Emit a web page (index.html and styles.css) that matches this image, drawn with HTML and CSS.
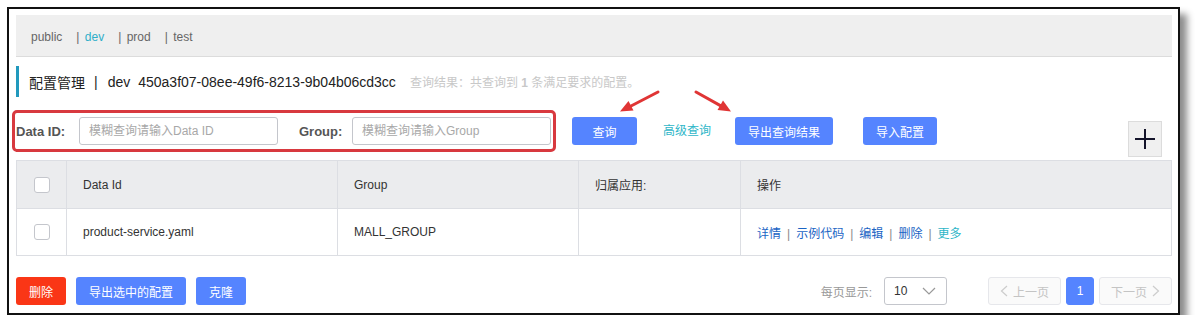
FILE: index.html
```html
<!DOCTYPE html>
<html lang="zh-CN">
<head>
    <meta charset="UTF-8">
    <title>配置管理</title>
    <link rel="stylesheet" href="styles.css">
</head>
<body>
<div class="frame">
    <div class="ns-bar">
        <span class="ns">public</span>
        <span class="ns"><i>|</i> <em>dev</em></span>
        <span class="ns"><i>|</i> prod</span>
        <span class="ns"><i>|</i> test</span>
    </div>

    <div class="title-row">
        <span class="title-cn">配置管理</span>
        <span class="title-sep">|</span>
        <span class="title-ns">dev</span>
        <span class="title-id">450a3f07-08ee-49f6-8213-9b04b06cd3cc</span>
        <span class="title-result">查询结果：共查询到 <b>1</b> 条满足要求的配置。</span>
    </div>

    <div class="search-row">
        <div class="search-box">
            <label class="lbl lbl-id">Data ID:</label>
            <input class="inp" type="text" placeholder="模糊查询请输入Data ID">
            <label class="lbl lbl-group">Group:</label>
            <input class="inp" type="text" placeholder="模糊查询请输入Group">
        </div>
        <button class="btn btn-query">查询</button>
        <a class="adv-link">高级查询</a>
        <button class="btn btn-export">导出查询结果</button>
        <button class="btn btn-import">导入配置</button>
        <button class="btn-add" aria-label="add">
            <svg width="22" height="22" viewBox="0 0 22 22"><path d="M1 11H21M11 1V21" stroke="#14142a" stroke-width="2"/></svg>
        </button>
    </div>

    <table class="cfg-table">
        <thead>
            <tr>
                <th class="col-check"><span class="chk"></span></th>
                <th class="col-id">Data Id</th>
                <th class="col-group">Group</th>
                <th class="col-app">归属应用:</th>
                <th>操作</th>
            </tr>
        </thead>
        <tbody>
            <tr>
                <td class="col-check"><span class="chk"></span></td>
                <td>product-service.yaml</td>
                <td>MALL_GROUP</td>
                <td></td>
                <td class="ops">
                    <a>详情</a><span class="bar">|</span><a>示例代码</a><span class="bar">|</span><a>编辑</a><span class="bar">|</span><a>删除</a><span class="bar">|</span><a class="more">更多</a>
                </td>
            </tr>
        </tbody>
    </table>

    <div class="foot-row">
        <button class="btn btn-del">删除</button>
        <button class="btn btn-sel">导出选中的配置</button>
        <button class="btn btn-clone">克隆</button>

        <div class="pager">
            <span class="per-page">每页显示:</span>
            <div class="page-size">
                <span>10</span>
                <svg width="14" height="8" viewBox="0 0 14 8"><path d="M1 1L7 7L13 1" fill="none" stroke="#999" stroke-width="1.2"/></svg>
            </div>
            <button class="pg pg-prev">
                <svg width="8" height="12" viewBox="0 0 8 12"><path d="M7 1L1.5 6L7 11" fill="none" stroke="#ccc" stroke-width="1.2"/></svg>
                上一页
            </button>
            <button class="pg pg-cur">1</button>
            <button class="pg pg-next">
                下一页
                <svg width="8" height="12" viewBox="0 0 8 12"><path d="M1 1L6.5 6L1 11" fill="none" stroke="#ccc" stroke-width="1.2"/></svg>
            </button>
        </div>
    </div>

    <!-- annotation arrows drawn over the screenshot -->
    <svg class="marks" width="1196" height="330" viewBox="0 0 1196 330">
        <path d="M658 92L631 106" stroke="#e03535" stroke-width="3" stroke-linecap="round"/>
        <polygon points="620,111.5 633.5,110.5 628.5,101" fill="#e03535"/>
        <path d="M696 92L720.4 105.6" stroke="#e03535" stroke-width="3" stroke-linecap="round"/>
        <polygon points="731,111.5 717.5,110 723,100.5" fill="#e03535"/>
    </svg>
</div>
</body>
</html>
```

FILE: styles.css
```css
body {
    margin: 0;
    background: #fff;
    font-family: "Liberation Sans", "Noto Sans CJK SC", sans-serif;
    font-size: 12px;
    color: #333;
}
.frame {
    position: relative;
    box-sizing: border-box;
    width: 1173px;
    height: 308px;
    margin: 7px 0 0 7px;
    padding: 6px 6px 9px 7px;
    border: 2px solid #111;
    background: #fff;
    box-shadow: 7px 7px 7px rgba(0, 0, 0, 0.45);
}
/* namespace bar */
.ns-bar {
    display: flex;
    align-items: center;
    box-sizing: border-box;
    height: 42px;
    padding: 3px 0 0 15px;
    background: #efefef;
    border-bottom: 1px solid #dcdcdc;
    color: #666;
}
.ns {
    margin-right: 14px;
}
.ns i {
    margin-right: 2px;
    font-style: normal;
}
.ns em {
    font-style: normal;
    color: #2eaec9;
}
/* title */
.title-row {
    display: flex;
    align-items: center;
    height: 31px;
    margin-top: 9px;
    padding-left: 10px;
    border-left: 3px solid #2199bd;
    font-size: 14px;
    color: #222;
}
.title-sep {
    margin: 0 10px 0 9px;
}
.title-ns {
    margin-right: 8px;
}
.title-result {
    margin-left: 14px;
    font-size: 12px;
    color: #c8c8c8;
}
.title-result b {
    font-weight: bold;
}
/* search */
.search-row {
    display: flex;
    align-items: flex-start;
    height: 47px;
    margin-top: 13px;
}
.search-box {
    display: flex;
    align-items: center;
    box-sizing: border-box;
    width: 544px;
    height: 42px;
    margin-left: -4px;
    padding-left: 1px;
    border: 3px solid #d8393f;
    border-radius: 5px;
}
.lbl {
    font-size: 13px;
    font-weight: bold;
    color: #555;
}
.lbl-id {
    width: 63px;
}
.lbl-group {
    width: 53px;
    margin-left: 21px;
}
.inp {
    box-sizing: border-box;
    width: 199px;
    height: 28px;
    padding: 0 9px;
    border: 1px solid #c4c6cc;
    border-radius: 3px;
    font-family: "Liberation Sans", "Noto Sans CJK SC", sans-serif;
    font-size: 12px;
    color: #333;
}
.inp::placeholder {
    color: #a8a8a8;
}
.btn {
    box-sizing: border-box;
    height: 28px;
    padding: 0 13px;
    border: none;
    border-radius: 3px;
    background: #5584ff;
    color: #fff;
    font-family: "Liberation Sans", "Noto Sans CJK SC", sans-serif;
    font-size: 12px;
}
.search-row .btn {
    margin-top: 7px;
}
.btn-query {
    width: 65px;
    margin-left: 16px;
}
.adv-link {
    margin: 7px 24px 0 26px;
    line-height: 28px;
    color: #2eb6c8;
}
.btn-export {
    width: 98px;
}
.btn-import {
    width: 74px;
    margin-left: 30px;
}
.btn-add {
    display: flex;
    align-items: center;
    justify-content: center;
    box-sizing: border-box;
    width: 34px;
    height: 36px;
    margin: 11px 10px 0 auto;
    padding: 0;
    border: 1px solid #dcdcdc;
    background: #f0f0f0;
}
/* table */
.cfg-table {
    width: 1156px;
    margin-top: 3px;
    border-collapse: collapse;
    table-layout: fixed;
}
.cfg-table th,
.cfg-table td {
    padding: 0 0 0 16px;
    border: 1px solid #dcdee3;
    text-align: left;
    font-weight: normal;
    color: #333;
}
.cfg-table th {
    height: 47px;
    background: #ebecee;
}
.cfg-table td {
    height: 46px;
}
.cfg-table .col-check {
    width: 32px;
    padding: 0 0 0 17px;
}
.col-id {
    width: 254px;
}
.col-group {
    width: 224px;
}
.col-app {
    width: 145px;
}
.chk {
    display: block;
    box-sizing: border-box;
    width: 16px;
    height: 16px;
    border: 1px solid #c4c6cc;
    border-radius: 3px;
    background: #fff;
}
.ops a {
    color: #1a64c4;
}
.ops a.more {
    color: #2eb6c8;
}
.ops .bar {
    margin: 0 6px;
    color: #888;
}
/* footer */
.foot-row {
    display: flex;
    align-items: center;
    height: 28px;
    margin-top: 21px;
}
.btn-del {
    width: 50px;
    background: #fa3616;
}
.btn-sel {
    width: 110px;
    margin-left: 10px;
}
.btn-clone {
    width: 50px;
    margin-left: 10px;
}
.pager {
    display: flex;
    align-items: center;
    margin-left: auto;
}
.per-page {
    color: #999;
}
.page-size {
    display: flex;
    align-items: center;
    justify-content: space-between;
    box-sizing: border-box;
    width: 63px;
    height: 28px;
    margin-left: 12px;
    padding: 0 10px 0 9px;
    border: 1px solid #c4c6cc;
    border-radius: 3px;
    color: #333;
}
.pg {
    display: flex;
    align-items: center;
    justify-content: center;
    gap: 5px;
    box-sizing: border-box;
    height: 28px;
    padding: 0;
    border: 1px solid #e6e7eb;
    border-radius: 3px;
    background: #fafafa;
    color: #c4c4c4;
    font-family: "Liberation Sans", "Noto Sans CJK SC", sans-serif;
    font-size: 12px;
}
.pg-prev {
    width: 73px;
    margin-left: 41px;
}
.pg-cur {
    width: 28px;
    margin-left: 5px;
    border-color: #5584ff;
    background: #5584ff;
    color: #fff;
}
.pg-next {
    width: 73px;
    margin-left: 5px;
}
/* annotation overlay */
.marks {
    position: absolute;
    left: -9px;
    top: -9px;
    pointer-events: none;
}
```
